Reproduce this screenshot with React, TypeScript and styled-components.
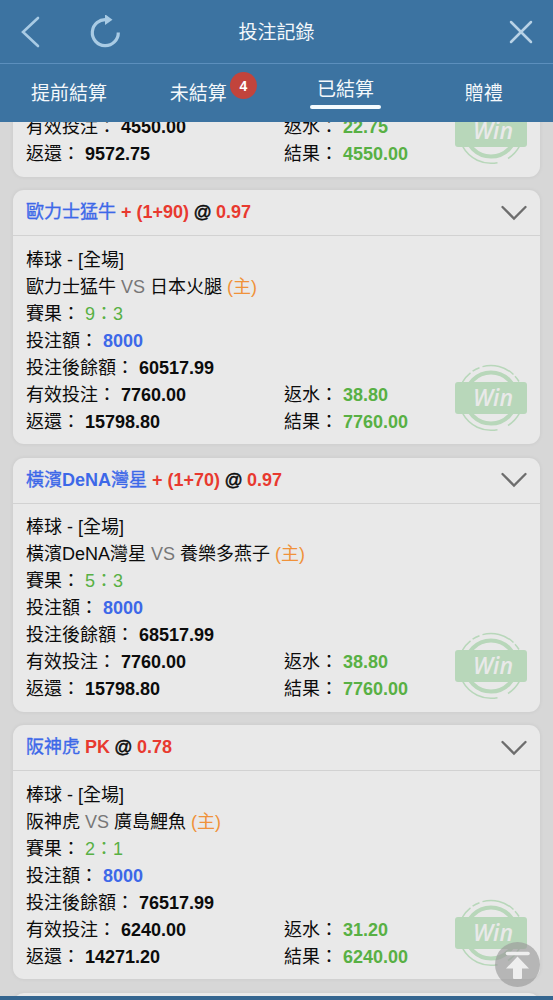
import React from 'react';
import styled, { createGlobalStyle } from 'styled-components';

const GlobalStyle = createGlobalStyle`
  * { box-sizing: border-box; }
  body {
    margin: 0;
    background: #d7d7d7;
    font-family: "Liberation Sans", "Noto Sans CJK TC", sans-serif;
    color: #0c0c0c;
  }
`;

const Screen = styled.div`
  position: relative;
  display: flex;
  flex-direction: column;
  width: 553px;
  height: 1000px;
  overflow: hidden;
  background: #d7d7d7;
`;

const TopBar = styled.header`
  flex: none;
  display: flex;
  flex-direction: column;
  height: 122px;
  background: #3c73a1;
  color: #f4f8fb;
`;

const TitleRow = styled.div`
  display: grid;
  grid-template-columns: 1fr auto 1fr;
  align-items: center;
  height: 64px;
  border-bottom: 1px solid #5c8fbd;
`;

const LeftTools = styled.div`
  display: flex;
  align-items: center;
  gap: 50px;
  padding-left: 20px;
`;

const RightTools = styled.div`
  display: flex;
  justify-content: flex-end;
  padding-right: 19.5px;
`;

const IconButton = styled.button`
  display: flex;
  padding: 0;
  border: 0;
  background: none;
`;

const Title = styled.h1`
  margin: 0;
  padding-top: 2px;
  font-size: 19px;
  line-height: 28px;
  font-weight: 400;
`;

const Tabs = styled.nav`
  display: grid;
  grid-template-columns: repeat(4, 1fr);
  height: 58px;
`;

const Tab = styled.button<{ $active?: boolean }>`
  display: flex;
  flex-direction: column;
  align-items: center;
  padding: ${p => (p.$active ? '12px' : '16px')} 0 0;
  border: 0;
  background: none;
  color: inherit;
  font: inherit;
  font-size: 19px;
  line-height: 28px;
`;

const TabLabel = styled.span<{ $roomForBadge?: boolean }>`
  position: relative;
  margin-right: ${p => (p.$roomForBadge ? 18 : 0)}px;
`;

const Underline = styled.span`
  width: 71px;
  height: 4px;
  margin-top: 1px;
  border-radius: 2px;
  background: #f4fbff;
`;

const Badge = styled.span`
  position: absolute;
  left: 60px;
  top: -8.5px;
  width: 27px;
  height: 27px;
  border-radius: 50%;
  background: #c2443c;
  color: #fff;
  font-size: 14px;
  line-height: 28px;
  font-weight: 700;
  text-align: center;
`;

const ScrollArea = styled.main`
  flex: 1;
  min-height: 0;
  overflow: hidden;
`;

const BetList = styled.div`
  display: flex;
  flex-direction: column;
  gap: 13.5px;
  margin-top: -18.5px;
  padding: 0 13px;
`;

const Card = styled.article<{ $height?: number }>`
  flex: none;
  height: ${p => p.$height ?? 254}px;
  border-radius: 11px;
  background: #e9e9e9;
  box-shadow: 0 0 4px rgba(0, 0, 0, 0.07);
`;

const CardHeader = styled.header`
  display: flex;
  align-items: center;
  justify-content: space-between;
  height: 46px;
  padding: 0 13px;
  border-bottom: 1px solid #d2d2d2;
  font-size: 18px;
  line-height: 27px;
  font-weight: 700;
`;

const Pick = styled.span`
  color: #3d68e8;
`;

const PickHan = styled.span`
  font-weight: 400;
  -webkit-text-stroke: 0.35px #3d68e8;
`;

const At = styled.span`
  margin: 0 -0.7px;
  font-weight: 400;
  -webkit-text-stroke: 0.5px #0c0c0c;
`;

const Odds = styled.span`
  color: #e8392f;
`;

const CardBody = styled.div`
  display: flex;
  justify-content: space-between;
  padding: 10.5px 13px 0;
  font-size: 18px;
  line-height: 27px;
`;

const Details = styled.div`
  flex: 1;
`;

const Line = styled.div`
  white-space: pre;
`;

const SplitLine = styled.div`
  display: grid;
  grid-template-columns: 258px 1fr;
  white-space: pre;
`;

const tones = {
  black: '#0c0c0c',
  blue: '#3d68e8',
  green: '#58b044',
};

const Value = styled.span<{ $tone?: keyof typeof tones; $plain?: boolean }>`
  color: ${p => tones[p.$tone ?? 'black']};
  font-weight: ${p => (p.$plain ? 400 : 700)};
`;

const Versus = styled.span`
  color: #777;
`;

const Home = styled.span`
  color: #f0923a;
`;

const Stamp = styled.svg`
  flex: none;
  align-self: flex-end;
  margin: -24px 0 3.5px;
`;

const BackToTop = styled.button`
  position: absolute;
  left: 495px;
  top: 942px;
  display: flex;
  width: 45px;
  height: 45px;
  padding: 0;
  border: 0;
  border-radius: 50%;
  background: rgba(155, 155, 155, 0.66);
`;

const BottomBar = styled.footer`
  flex: none;
  height: 4px;
  background: #34658f;
`;

type Settlement = {
  valid: string;
  back: string;
  rebate: string;
  result: string;
};

type Bet = Settlement & {
  pick: string;
  handicap: string;
  odds: string;
  away: string;
  score: string;
  stake: string;
  balance: string;
};

const previous: Settlement = { valid: '4550.00', back: '9572.75', rebate: '22.75', result: '4550.00' };

const bets: Bet[] = [
  { pick: '歐力士猛牛', handicap: '+ (1+90)', odds: '0.97', away: '日本火腿', score: '9：3', stake: '8000', balance: '60517.99', valid: '7760.00', back: '15798.80', rebate: '38.80', result: '7760.00' },
  { pick: '橫濱DeNA灣星', handicap: '+ (1+70)', odds: '0.97', away: '養樂多燕子', score: '5：3', stake: '8000', balance: '68517.99', valid: '7760.00', back: '15798.80', rebate: '38.80', result: '7760.00' },
  { pick: '阪神虎', handicap: 'PK', odds: '0.78', away: '廣島鯉魚', score: '2：1', stake: '8000', balance: '76517.99', valid: '6240.00', back: '14271.20', rebate: '31.20', result: '6240.00' },
];

const WinStamp = () => (
  <Stamp width="72" height="68" viewBox="0 0 72 68" fill="none">
    <circle cx="36" cy="34" r="25.5" stroke="#b8d7ba" strokeWidth="4" />
    <path d="M27.5 2.6A32.5 32.5 0 0 1 58.5 10.5M60 12.3A32.5 32.5 0 0 1 64 17.5M17.6 7.2A32.5 32.5 0 0 1 24.5 3.8M7.5 18.2A32.5 32.5 0 0 1 15.5 8.9" stroke="#b8d7ba" strokeWidth="1.5" />
    <path d="M7.5 49.2A32.5 32.5 0 0 0 42.5 65.7M53 61.5A32.5 32.5 0 0 0 64.5 49.2" stroke="#b8d7ba" strokeWidth="1.5" />
    <rect x="0" y="18" width="72" height="32" rx="3" fill="#b8d7ba" />
    <text x="38" y="42" textAnchor="middle" fontFamily="'Open Sans', 'Noto Sans', sans-serif" fontSize="23" fontStyle="italic" fontWeight="600" fill="#e9e9e9">Win</text>
  </Stamp>
);

const PickName = ({ name }: { name: string }) => (
  <Pick>
    {name.split(/([A-Za-z]+)/).map((part, i) => (i % 2 ? part : <PickHan key={i}>{part}</PickHan>))}
  </Pick>
);

const SettlementLines = ({ data }: { data: Settlement }) => (
  <>
    <SplitLine>
      <span>有效投注： <Value>{data.valid}</Value></span>
      <span>返水： <Value $tone="green">{data.rebate}</Value></span>
    </SplitLine>
    <SplitLine>
      <span>返還： <Value>{data.back}</Value></span>
      <span>結果： <Value $tone="green">{data.result}</Value></span>
    </SplitLine>
  </>
);

const BetCard = ({ bet }: { bet: Bet }) => (
  <Card>
    <CardHeader>
      <span>
        <PickName name={bet.pick} /> <Odds>{bet.handicap}</Odds> <At>@</At> <Odds>{bet.odds}</Odds>
      </span>
      <svg width="26" height="16" viewBox="0 0 26 16" fill="none">
        <path d="M1.5 2 13 13.5 24.5 2" stroke="#6d6d6d" strokeWidth="2.3" strokeLinecap="round" />
      </svg>
    </CardHeader>
    <CardBody>
      <Details>
        <Line>棒球 - [全場]</Line>
        <Line>{bet.pick} <Versus>VS</Versus> {bet.away} <Home>(主)</Home></Line>
        <Line>賽果： <Value $tone="green" $plain>{bet.score}</Value></Line>
        <Line>投注額： <Value $tone="blue">{bet.stake}</Value></Line>
        <Line>投注後餘額： <Value>{bet.balance}</Value></Line>
        <SettlementLines data={bet} />
      </Details>
      <WinStamp />
    </CardBody>
  </Card>
);

export default function App() {
  return (
    <Screen lang="zh-Hant">
      <GlobalStyle />
      <TopBar>
        <TitleRow>
          <LeftTools>
            <IconButton aria-label="返回">
              <svg width="20" height="32" viewBox="0 0 20 32" fill="none">
                <path d="M18 2 3 16 18 30" stroke="#a9cbe4" strokeWidth="2.6" strokeLinecap="round" />
              </svg>
            </IconButton>
            <IconButton aria-label="重新整理">
              <svg width="32" height="34" viewBox="0 0 32 34" fill="none">
                <path d="M28.3 17.5A13 13 0 1 1 17 4.8" stroke="#a9cbe4" strokeWidth="3.2" />
                <path d="M15 -0.8 22.5 4.8 15 10Z" fill="#a9cbe4" />
              </svg>
            </IconButton>
          </LeftTools>
          <Title>投注記錄</Title>
          <RightTools>
            <IconButton aria-label="關閉">
              <svg width="26" height="26" viewBox="0 0 26 26" fill="none">
                <path d="M3 3 23 23M23 3 3 23" stroke="#b8d2e6" strokeWidth="2.5" strokeLinecap="round" />
              </svg>
            </IconButton>
          </RightTools>
        </TitleRow>
        <Tabs>
          <Tab><TabLabel>提前結算</TabLabel></Tab>
          <Tab><TabLabel $roomForBadge>未結算<Badge>4</Badge></TabLabel></Tab>
          <Tab $active><TabLabel>已結算</TabLabel><Underline /></Tab>
          <Tab><TabLabel>贈禮</TabLabel></Tab>
        </Tabs>
      </TopBar>
      <ScrollArea>
        <BetList>
          <Card $height={73}>
            <CardBody>
              <Details>
                <SettlementLines data={previous} />
              </Details>
              <WinStamp />
            </CardBody>
          </Card>
          {bets.map(bet => <BetCard key={bet.pick} bet={bet} />)}
          <Card />
        </BetList>
      </ScrollArea>
      <BottomBar />
      <BackToTop aria-label="回到頂部">
        <svg width="45" height="45" viewBox="0 0 45 45" fill="none">
          <path d="M12.5 11.5H33" stroke="#eee" strokeWidth="3.6" strokeLinecap="round" />
          <path d="M22.5 14.5 34 26.5H27V36Q27 37 26 37H19Q18 37 18 36V26.5H11Z" fill="#eee" />
        </svg>
      </BackToTop>
    </Screen>
  );
}
